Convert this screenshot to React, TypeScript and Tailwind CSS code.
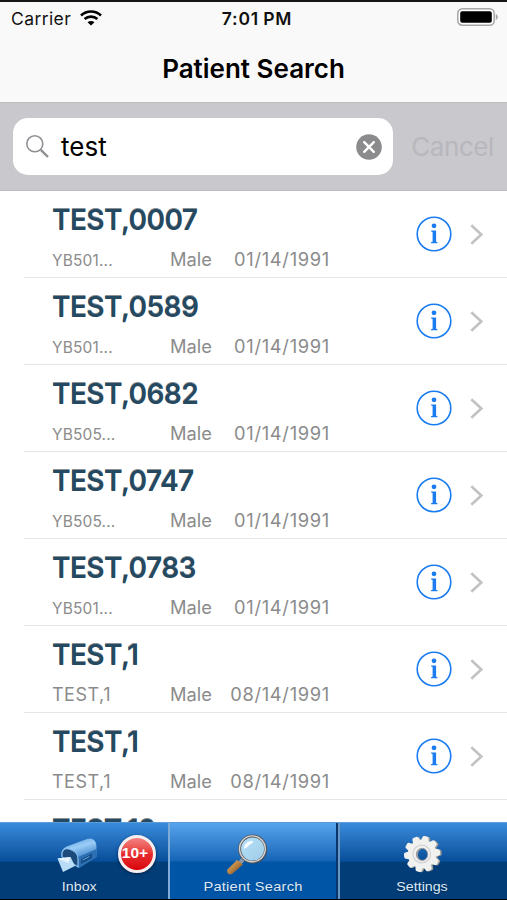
const patients = [
  { id: 1, name: "TEST,0007", code: "YB501...", sex: "Male", dob: "01/14/1991" },
  { id: 2, name: "TEST,0589", code: "YB501...", sex: "Male", dob: "01/14/1991" },
  { id: 3, name: "TEST,0682", code: "YB505...", sex: "Male", dob: "01/14/1991" },
  { id: 4, name: "TEST,0747", code: "YB505...", sex: "Male", dob: "01/14/1991" },
  { id: 5, name: "TEST,0783", code: "YB501...", sex: "Male", dob: "01/14/1991" },
  { id: 6, name: "TEST,1", code: "TEST,1", sex: "Male", dob: "08/14/1991" },
  { id: 7, name: "TEST,1", code: "TEST,1", sex: "Male", dob: "08/14/1991" },
];

const StatusBar = () => (
  <div className="flex h-[34px] items-center pl-[11px] pr-[8px] text-[17.5px] leading-none text-[#111]">
    <div className="flex flex-1 items-center gap-[9px]">
      <span className="tracking-[0.4px]">Carrier</span>
      <svg width="22" height="16" viewBox="0 0 22 16" fill="none" stroke="#000" strokeWidth="2.7" className="-translate-y-px">
        <path d="M1 5.4C6.6 .2 15.4 .2 21 5.4" />
        <path d="M4.6 9.1c3.7-3.3 9.1-3.3 12.8 0" />
        <path d="M11 15.6 7.5 12.2c2-1.7 5-1.7 7 0z" fill="#000" stroke="none" />
      </svg>
    </div>
    <span className="translate-x-[2px] text-[17.5px] font-semibold tracking-[0.8px] [word-spacing:-1px]">7:01 PM</span>
    <div className="flex flex-1 justify-end">
      <svg width="42" height="18" viewBox="0 0 42 18" className="-translate-y-[2px]">
        <rect x=".8" y=".8" width="36.4" height="16.4" rx="4.5" fill="#fff" stroke="#a6a6a6" strokeWidth="1.5" />
        <rect x="3.2" y="3.2" width="31.6" height="11.6" rx="2" fill="#000" />
        <path d="M38.8 6v6c2.6-1 2.6-5 0-6z" fill="#a6a6a6" />
      </svg>
    </div>
  </div>
);

const SearchBar = () => (
  <div className="flex h-[89px] shrink-0 items-center border-y border-[#bdbdc0] bg-[#c9c8cd] pl-[13px] pr-[13px] text-[26px] leading-none">
    <div className="flex h-[57px] w-[380px] items-center rounded-[15px] bg-white pl-[13px] pr-[11px]">
      <svg width="23" height="23" viewBox="0 0 23 23" fill="none" stroke="#8e8e93">
        <circle cx="8.8" cy="8.8" r="8" strokeWidth="1.6" />
        <path d="m14.8 14.8 7.2 7.2" strokeWidth="2.4" />
      </svg>
      <span className="ml-[12px] flex-1 text-black">test</span>
      <svg width="26" height="26" viewBox="0 0 26 26">
        <circle cx="13" cy="13" r="12.8" fill="#8b8b8d" />
        <path d="m8.2 8.2 9.6 9.6m0-9.6-9.6 9.6" stroke="#fff" strokeWidth="2.4" strokeLinecap="round" />
      </svg>
    </div>
    <span className="ml-auto tracking-[-0.4px] text-[#b8b7bd]">Cancel</span>
  </div>
);

const InfoIcon = () => (
  <svg width="36" height="36" viewBox="0 0 36 36">
    <circle cx="18" cy="18" r="16.8" fill="none" stroke="#1a7cf0" strokeWidth="1.6" />
    <circle cx="18" cy="9.8" r="2.4" fill="#1a7cf0" />
    <path d="M15.1 14.5h5v11.3l1.4.4v1H15v-1l1.6-.4V16l-1.5-.4z" fill="#1a7cf0" />
  </svg>
);

const MailboxIcon = () => (
  <svg width="42" height="36" viewBox="0 0 42 36">
    <defs>
      <linearGradient id="mailTop" x1=".3" y1="0" x2=".65" y2="1">
        <stop offset="0" stopColor="#5b9fde" />
        <stop offset=".3" stopColor="#9bcdf7" />
        <stop offset=".6" stopColor="#5797d6" />
        <stop offset="1" stopColor="#2263a6" />
      </linearGradient>
    </defs>
    <path d="M5 18C4 12 7 9.500 11 8L30 1c6-2 9.500 2 9.500 8v10L22 30 8 22z" fill="url(#mailTop)" />
    <path d="M21 19 39.500 11v8L22 30z" fill="#2c70b3" />
    <path d="m24 21 11-5.500v4.500l-11 6z" fill="#174e88" />
    <path d="m25.500 22 7-3.500" stroke="#5d9fd9" strokeWidth="1" />
    <path d="M5 19c-1-6 2-9.500 7-8 6 1.500 9 5 9 10v8l-6-4z" fill="#1b4a7c" stroke="#8cc2f0" strokeWidth="1.200" />
    <path d="m.5 20.500 13-1.500 4.500 9L6 34z" fill="#b9dcf7" />
    <path d="m.5 20.500 11 4.500 2-6z" fill="#e5f4ff" />
  </svg>
);

const MagnifierIcon = () => (
  <svg width="44" height="42" viewBox="0 0 44 42">
    <defs>
      <linearGradient id="handle" x1="0" y1="0" x2="1" y2="1">
        <stop offset="0" stopColor="#efbd78" />
        <stop offset=".5" stopColor="#b9803f" />
        <stop offset="1" stopColor="#5b3b1d" />
      </linearGradient>
      <linearGradient id="lens" x1="0" y1="0" x2="1" y2="1">
        <stop offset="0" stopColor="#b9e2fa" />
        <stop offset="1" stopColor="#9dcbe6" />
      </linearGradient>
    </defs>
    <path d="m19 24-4 5" stroke="#8a99a5" strokeWidth="4" />
    <path d="m12 26 6 4.500L7 40c-3 1.500-6-1.500-4.500-4.500z" fill="url(#handle)" />
    <circle cx="28.6" cy="16" r="13.5" fill="#143c69" opacity=".6" />
    <circle cx="27.6" cy="15" r="13" fill="url(#lens)" stroke="#55585c" strokeWidth="3" />
    <circle cx="27.4" cy="14.8" r="12.9" fill="none" stroke="#d5d5d5" strokeWidth="1.4" />
    <path d="M19 14.500c0-4 3-7 8-7.500 2 0 1 2-1 3-3 1-3 4-7 4.500z" fill="#fff" opacity=".9" />
  </svg>
);

const teeth = [0, 36, 72, 108, 144, 180, 216, 252, 288, 324];

const GearShape = () => (
  <>
    {teeth.map((angle) => (
      <path key={angle} d="M15.500 8 16.700 2.6Q17 1 18.500 1h3q1.500 0 1.800 1.600L24.500 8z" transform={`rotate(${angle + 12} 20 20)`} />
    ))}
    <path fillRule="evenodd" d="M20 5a15 15 0 1 0 0 30 15 15 0 0 0 0-30zm0 9a6 6.4 0 1 1 0 12.8A6 6.4 0 0 1 20 14z" />
  </>
);

const GearIcon = () => (
  <svg width="40" height="38" viewBox="0 0 42 40">
    <g fill="#9b9b9b" transform="translate(1.7 .3)">
      <GearShape />
    </g>
    <g fill="#f1f1f0">
      <GearShape />
    </g>
    <circle cx="19.6" cy="20" r="9.3" fill="none" stroke="#d0d2d3" strokeWidth="1.2" />
    <ellipse cx="20" cy="20.4" rx="6" ry="6.4" fill="none" stroke="#90979e" strokeWidth="1" />
  </svg>
);

const TabBar = () => (
  <nav className="flex h-[78px] shrink-0 border-b border-black border-t border-t-[#5b9bd7] text-[13.3px] leading-none text-[#dfe8f2] [font-family:'Liberation_Sans',sans-serif]">
    <div className="relative flex w-[168px] flex-col items-center bg-linear-to-b from-[#398bdc] from-0% via-[#074f9a] via-50% to-[#023d77] to-52% pt-[15px]">
      <div className="-translate-x-[6px]">
        <MailboxIcon />
      </div>
      <span className="mt-[6px] -translate-x-[5px] scale-x-[1.07] [text-shadow:0_1px_1px_#022d5c]">Inbox</span>
      <div className="absolute left-[118px] top-[12px] flex size-[38px] items-center justify-center rounded-full border-[3px] border-[#f4eef0] bg-linear-to-b from-[#f28282] via-[#e72a2e] to-[#d90008] text-[15.5px] font-bold text-white shadow-[0_1px_3px_#021d40]">
        <span className="-translate-x-[2px] -translate-y-[1px]">10+</span>
      </div>
    </div>
    <div className="flex w-[170px] flex-col items-center border-x-2 border-l-[#7eabd8] border-r-[#08366c] bg-linear-to-b from-[#55a4ed] from-0% via-[#1766b8] via-49% to-[#0055a6] to-52% pt-[11px]">
      <div className="-translate-x-[6px]">
        <MagnifierIcon />
      </div>
      <span className="mt-[4px] scale-x-[1.1] tracking-[0.2px] [text-shadow:0_1px_1px_#03458a]">Patient Search</span>
    </div>
    <div className="flex flex-1 flex-col items-center border-l-2 border-[#6796c4] bg-linear-to-b from-[#398bdc] from-0% via-[#074f9a] via-50% to-[#023d77] to-52% pt-[12px]">
      <div className="-translate-x-[1px]">
        <GearIcon />
      </div>
      <span className="mt-[7px] -translate-x-[1px] scale-x-[1.07] [text-shadow:0_1px_1px_#022d5c]">Settings</span>
    </div>
  </nav>
);

const App = () => {
  return (
    <div className="flex h-[900px] w-[507px] flex-col overflow-hidden bg-white [font-family:Inter,sans-serif]">
      <header className="h-[102px] shrink-0 border-t-2 border-[#151515] bg-[#f9f9f9]">
        <StatusBar />
        <h1 className="mt-[20px] text-center text-[26px] font-semibold leading-none text-black">Patient Search</h1>
      </header>
      <SearchBar />
      <main className="min-h-0 flex-1 overflow-hidden pl-[24px]">
        {patients.map((patient) => (
          <div key={patient.id} className="flex h-[87px] items-center border-b border-[#e6e6e6] pl-[28px] pr-[24px]">
            <div className="w-[278px] pt-[7px]">
              <div className="text-[28px] font-semibold leading-[34px] tracking-[-0.55px] text-[#244961] [text-shadow:0_-1px_0_#8a9094]">
                {patient.name}
              </div>
              <div className="mt-[10px] flex items-baseline text-[18.3px] leading-[24px] text-[#8b8b8b]">
                <span className={patient.code.startsWith("YB") ? "w-[118px] text-[15.5px] tracking-[0.15px]" : "w-[118px] text-[18px] tracking-[0.5px]"}>
                  {patient.code}
                </span>
                <span>{patient.sex}</span>
                <span className="ml-auto tracking-[0.7px]">{patient.dob}</span>
              </div>
            </div>
            <div className="ml-auto flex items-center gap-[18px]">
              <InfoIcon />
              <svg width="13" height="21" viewBox="0 0 13 21" fill="none" stroke="#c2c2c5" strokeWidth="2.6">
                <path d="m1.3 1.2 10 9.3-10 9.3" />
              </svg>
            </div>
          </div>
        ))}
        <div className="pl-[28px] pt-[13px] text-[28px] font-semibold leading-[34px] tracking-[-0.6px] text-[#244961] [text-shadow:0_-1px_0_#8a9094]">
          TEST,10
        </div>
      </main>
      <TabBar />
    </div>
  );
};

export default App;
